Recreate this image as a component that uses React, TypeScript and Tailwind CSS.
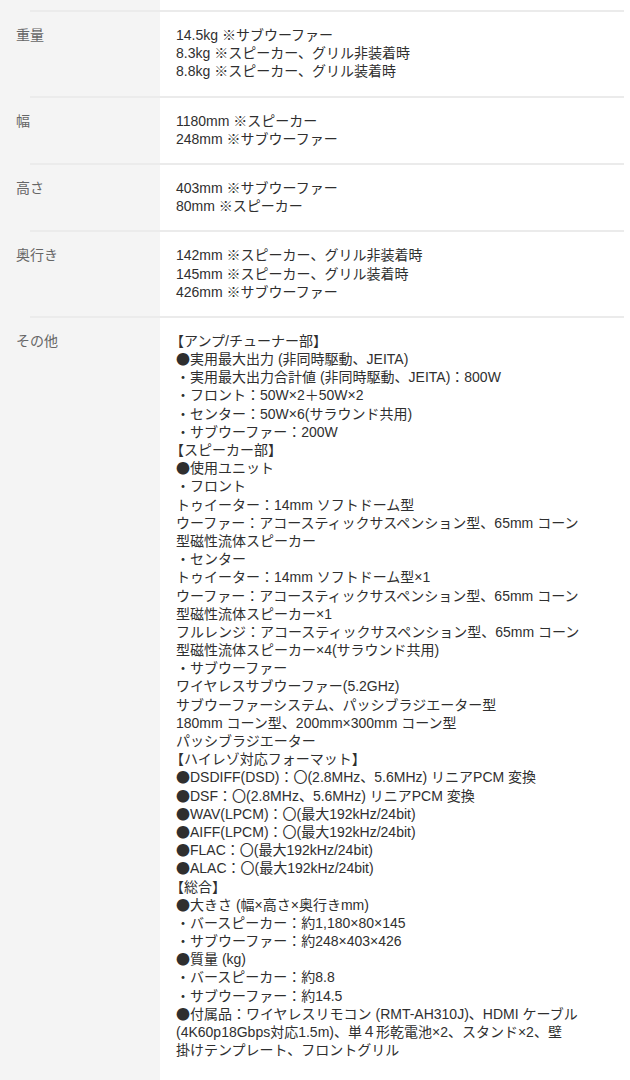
const specs = [
  {
    label: "重量",
    lines: ["14.5kg ※サブウーファー", "8.3kg ※スピーカー、グリル非装着時", "8.8kg ※スピーカー、グリル装着時"],
  },
  {
    label: "幅",
    lines: ["1180mm ※スピーカー", "248mm ※サブウーファー"],
  },
  {
    label: "高さ",
    lines: ["403mm ※サブウーファー", "80mm ※スピーカー"],
  },
  {
    label: "奥行き",
    lines: ["142mm ※スピーカー、グリル非装着時", "145mm ※スピーカー、グリル装着時", "426mm ※サブウーファー"],
  },
  {
    label: "その他",
    lines: [
      "【アンプ/チューナー部】",
      "●実用最大出力 (非同時駆動、JEITA)",
      "・実用最大出力合計値 (非同時駆動、JEITA)：800W",
      "・フロント：50W×2＋50W×2",
      "・センター：50W×6(サラウンド共用)",
      "・サブウーファー：200W",
      "【スピーカー部】",
      "●使用ユニット",
      "・フロント",
      "トゥイーター：14mm ソフトドーム型",
      "ウーファー：アコースティックサスペンション型、65mm コーン",
      "型磁性流体スピーカー",
      "・センター",
      "トゥイーター：14mm ソフトドーム型×1",
      "ウーファー：アコースティックサスペンション型、65mm コーン",
      "型磁性流体スピーカー×1",
      "フルレンジ：アコースティックサスペンション型、65mm コーン",
      "型磁性流体スピーカー×4(サラウンド共用)",
      "・サブウーファー",
      "ワイヤレスサブウーファー(5.2GHz)",
      "サブウーファーシステム、パッシブラジエーター型",
      "180mm コーン型、200mm×300mm コーン型",
      "パッシブラジエーター",
      "【ハイレゾ対応フォーマット】",
      "●DSDIFF(DSD)：〇(2.8MHz、5.6MHz) リニアPCM 変換",
      "●DSF：〇(2.8MHz、5.6MHz) リニアPCM 変換",
      "●WAV(LPCM)：〇(最大192kHz/24bit)",
      "●AIFF(LPCM)：〇(最大192kHz/24bit)",
      "●FLAC：〇(最大192kHz/24bit)",
      "●ALAC：〇(最大192kHz/24bit)",
      "【総合】",
      "●大きさ (幅×高さ×奥行きmm)",
      "・バースピーカー：約1,180×80×145",
      "・サブウーファー：約248×403×426",
      "●質量 (kg)",
      "・バースピーカー：約8.8",
      "・サブウーファー：約14.5",
      "●付属品：ワイヤレスリモコン (RMT-AH310J)、HDMI ケーブル",
      "(4K60p18Gbps対応1.5m)、単４形乾電池×2、スタンド×2、壁",
      "掛けテンプレート、フロントグリル",
    ],
  },
]

// the big bullet comes from the CJK font so it's full width
function Line({ text }: { text: string }) {
  const bullet = text.startsWith("●")
  const heading = text.startsWith("【")
  return (
    <div className={heading ? "-ml-[6px] h-[18.2px] whitespace-nowrap" : "h-[18.2px] whitespace-nowrap"}>
      {bullet && <span className="font-['Noto_Sans_CJK_JP'] leading-none">●</span>}
      {bullet ? text.slice(1) : text}
    </div>
  )
}

export default function App() {
  return (
    <div
      className="min-h-screen bg-[linear-gradient(to_right,#f4f4f4_160px,#ffffff_160px)] pt-[10px] text-[14px] leading-[1.3]"
      style={{ fontFamily: '"Liberation Sans", "Noto Sans CJK JP", sans-serif' }}
    >
      {specs.map((row) => (
        <div key={row.label}>
          {/* divider */}
          <div className="ml-[30px] mr-[6px] h-[2px] bg-[#ebebeb]" />
          <div className="grid grid-cols-[160px_1fr] pt-[14px] pb-[15px]">
            <div className="pl-4 text-[#666666]">{row.label}</div>
            <div className="pl-4 pr-4 text-[#2f2f2f]">
              {row.lines.map((line, i) => (
                <Line key={i} text={line} />
              ))}
            </div>
          </div>
        </div>
      ))}
    </div>
  )
}
